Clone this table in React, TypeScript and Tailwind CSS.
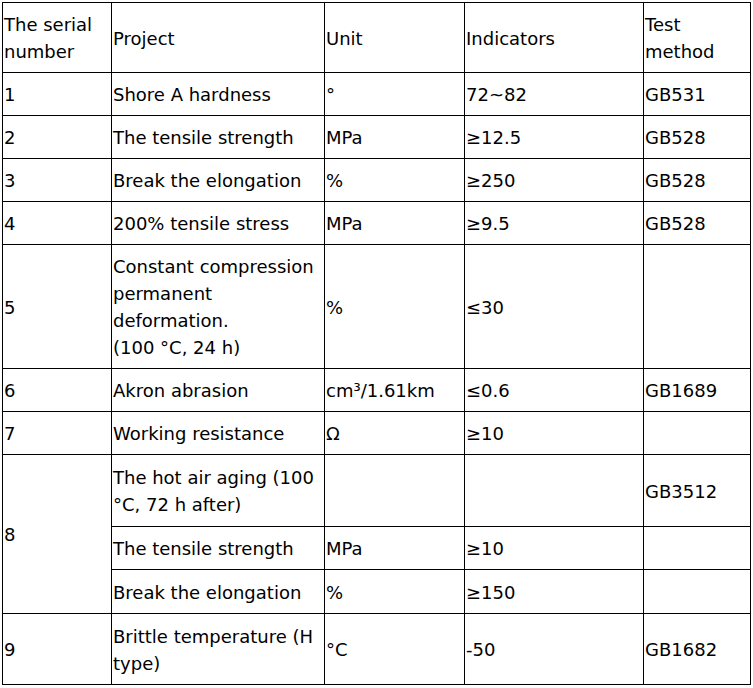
const rows: { no: string; project: React.ReactNode; unit: React.ReactNode; ind: string; method: string }[] = [
  { no: '1', project: 'Shore A hardness', unit: '°', ind: '72~82', method: 'GB531' },
  { no: '2', project: 'The tensile strength', unit: 'MPa', ind: '≥12.5', method: 'GB528' },
  { no: '3', project: 'Break the elongation', unit: '%', ind: '≥250', method: 'GB528' },
  { no: '4', project: '200% tensile stress', unit: 'MPa', ind: '≥9.5', method: 'GB528' },
  {
    no: '5',
    project: (
      <>
        Constant compression permanent deformation.
        <br />
        (100 °C, 24 h)
      </>
    ),
    unit: '%',
    ind: '≤30',
    method: '',
  },
  {
    no: '6',
    project: 'Akron abrasion',
    unit: 'cm³/1.61km',
    ind: '≤0.6',
    method: 'GB1689',
  },
  { no: '7', project: 'Working resistance', unit: 'Ω', ind: '≥10', method: '' },
]

const td = 'border border-black px-px pt-2 pb-[7px] align-middle text-left font-normal'

export default function App() {
  return (
    <div className="bg-white min-h-screen pl-[2px] pt-[2px]">
      <table
        className="table-fixed border-collapse text-black text-[18px] leading-[27px] w-[748px]"
        style={{ fontFamily: '"DejaVu Sans", Verdana, sans-serif' }}
      >
        <colgroup>
          <col className="w-[109px]" />
          <col className="w-[213px]" />
          <col className="w-[140px]" />
          <col className="w-[179px]" />
          <col className="w-[107px]" />
        </colgroup>
        <tbody>
          <tr>
            <td className={td}>The serial number</td>
            <td className={td}>Project</td>
            <td className={td}>Unit</td>
            <td className={td}>Indicators</td>
            <td className={td}>Test method</td>
          </tr>
          {rows.map((r) => (
            <tr key={r.no}>
              <td className={td}>{r.no}</td>
              <td className={td}>{r.project}</td>
              <td className={td}>{r.unit}</td>
              <td className={td}>{r.ind}</td>
              <td className={td}>{r.method}</td>
            </tr>
          ))}
          <tr className="h-[72px]">
            <td className={td} rowSpan={3}>
              8
            </td>
            <td className={td}>The hot air aging (100 °C, 72 h after)</td>
            <td className={td}></td>
            <td className={td}></td>
            <td className={td}>GB3512</td>
          </tr>
          <tr>
            <td className={td}>The tensile strength</td>
            <td className={td}>MPa</td>
            <td className={td}>≥10</td>
            <td className={td}></td>
          </tr>
          <tr className="h-[44px]">
            <td className={td}>Break the elongation</td>
            <td className={td}>%</td>
            <td className={td}>≥150</td>
            <td className={td}></td>
          </tr>
          <tr className="h-[71px]">
            <td className={td}>9</td>
            <td className={td}>Brittle temperature (H type)</td>
            <td className={td}>°C</td>
            <td className={td}>-50</td>
            <td className={td}>GB1682</td>
          </tr>
        </tbody>
      </table>
    </div>
  )
}
